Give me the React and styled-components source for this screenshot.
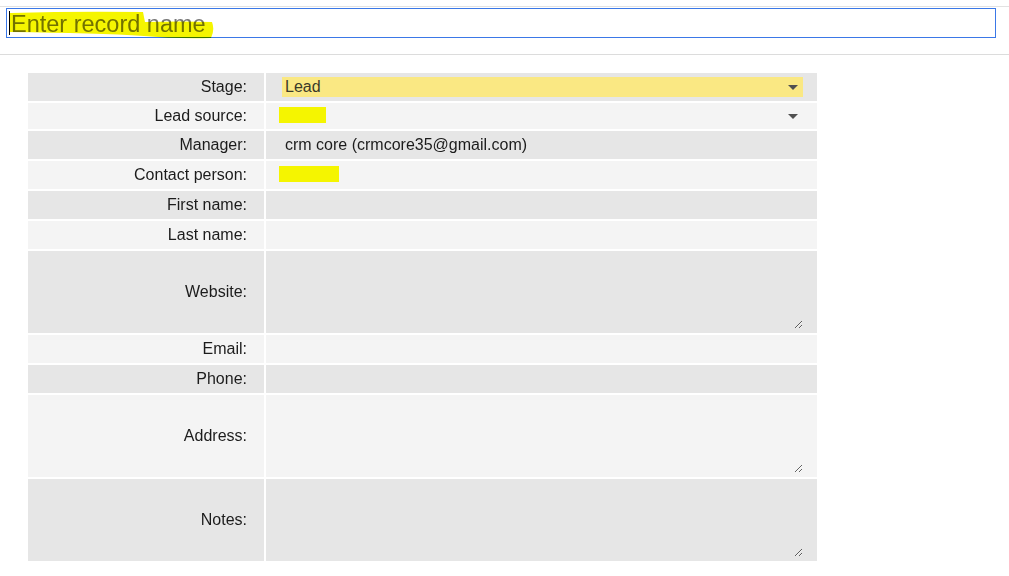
import React from 'react'
import styled, { createGlobalStyle } from 'styled-components'

const GlobalStyle = createGlobalStyle`
  body {
    margin: 0;
    background: #fff;
    font-family: 'Liberation Sans', Arial, sans-serif;
  }
`

const Header = styled.header`
  margin-top: 6px;
  border-top: 1px solid #e2e2e2;
  border-bottom: 1px solid #dcdcdc;
  padding: 1px 13px 16px 6px;
`
const NameField = styled.div`
  position: relative;
  height: 30px;
`
const NameInput = styled.input`
  box-sizing: border-box;
  width: 100%;
  height: 30px;
  border: 1px solid #3b78e7;
  outline: none;
  padding: 2px 0 0 4px;
  font-family: 'Liberation Sans', Arial, sans-serif;
  font-size: 23.5px;
  color: #222;

  &::placeholder {
    color: #777;
  }
`
const Caret = styled.span`
  position: absolute;
  left: 3px;
  top: 3px;
  width: 1px;
  height: 24px;
  background: #000;
`
const Marker = styled.svg`
  position: absolute;
  left: 0;
  top: 0;
  pointer-events: none;
  mix-blend-mode: multiply;
`

const Table = styled.table`
  margin: 16px 0 0 26px;
  width: 793px;
  border-spacing: 2px;
  font-size: 16px;
  color: #1c1c1c;
`
const Row = styled.tr`
  height: ${(p) => p.h || 28}px;
  background: ${(p) => (p.shade ? '#e6e6e6' : '#f4f4f4')};
`
const Label = styled.td`
  width: 219px;
  padding: 0 17px 0 0;
  text-align: right;
  vertical-align: middle;
`
const Value = styled.td`
  padding: 0 14px 0 16px;
  vertical-align: middle;
`
const Select = styled.div`
  position: relative;
  display: flex;
  align-items: center;
  height: 20px;
  padding-left: 3px;
  background: ${(p) => p.bg || 'transparent'};
  color: #3a3a2a;

  &::after {
    content: '';
    position: absolute;
    right: 5px;
    top: 8px;
    border-left: 5px solid transparent;
    border-right: 5px solid transparent;
    border-top: 5px solid #505050;
  }
`
const Redacted = styled.span`
  display: inline-block;
  vertical-align: middle;
  width: ${(p) => p.w}px;
  height: 16px;
  margin-left: -6px;
  margin-bottom: ${(p) => p.lift || 0}px;
  background: #f5f500;
`
const Plain = styled.div`
  padding-left: 3px;
`
const TextInput = styled.input`
  box-sizing: border-box;
  width: 100%;
  height: 20px;
  border: none;
  background: transparent;
  outline: none;
`
const TextArea = styled.textarea`
  display: block;
  box-sizing: border-box;
  width: 521px;
  height: 74px;
  margin: 0;
  border: none;
  background: transparent;
  outline: none;
  resize: vertical;
`

export default function App() {
  return (
    <>
      <GlobalStyle />
      <Header>
        <NameField>
          <NameInput placeholder="Enter record name" />
          <Caret />
          <Marker width="240" height="40">
            <path
              d="M4 5 Q70 3 137 4 L139 14 Q175 13 206 14 Q209 22 205 30 Q170 31 138 28 Q90 25 4 24 Q2 14 4 5 Z"
              fill="#f5f500"
            />
          </Marker>
        </NameField>
      </Header>
      <Table>
        <tbody>
          <Row shade>
            <Label>Stage:</Label>
            <Value>
              <Select bg="#fae883">Lead</Select>
            </Value>
          </Row>
          <Row h={26}>
            <Label>Lead source:</Label>
            <Value>
              <Select>
                <Redacted w={47} lift={3} />
              </Select>
            </Value>
          </Row>
          <Row shade>
            <Label>Manager:</Label>
            <Value>
              <Plain>crm core (crmcore35@gmail.com)</Plain>
            </Value>
          </Row>
          <Row>
            <Label>Contact person:</Label>
            <Value>
              <Plain>
                <Redacted w={60} lift={3} />
              </Plain>
            </Value>
          </Row>
          <Row shade>
            <Label>First name:</Label>
            <Value>
              <TextInput />
            </Value>
          </Row>
          <Row>
            <Label>Last name:</Label>
            <Value>
              <TextInput />
            </Value>
          </Row>
          <Row shade h={82}>
            <Label>Website:</Label>
            <Value>
              <TextArea />
            </Value>
          </Row>
          <Row>
            <Label>Email:</Label>
            <Value>
              <TextInput />
            </Value>
          </Row>
          <Row shade>
            <Label>Phone:</Label>
            <Value>
              <TextInput />
            </Value>
          </Row>
          <Row h={82}>
            <Label>Address:</Label>
            <Value>
              <TextArea />
            </Value>
          </Row>
          <Row shade h={82}>
            <Label>Notes:</Label>
            <Value>
              <TextArea />
            </Value>
          </Row>
        </tbody>
      </Table>
    </>
  )
}
